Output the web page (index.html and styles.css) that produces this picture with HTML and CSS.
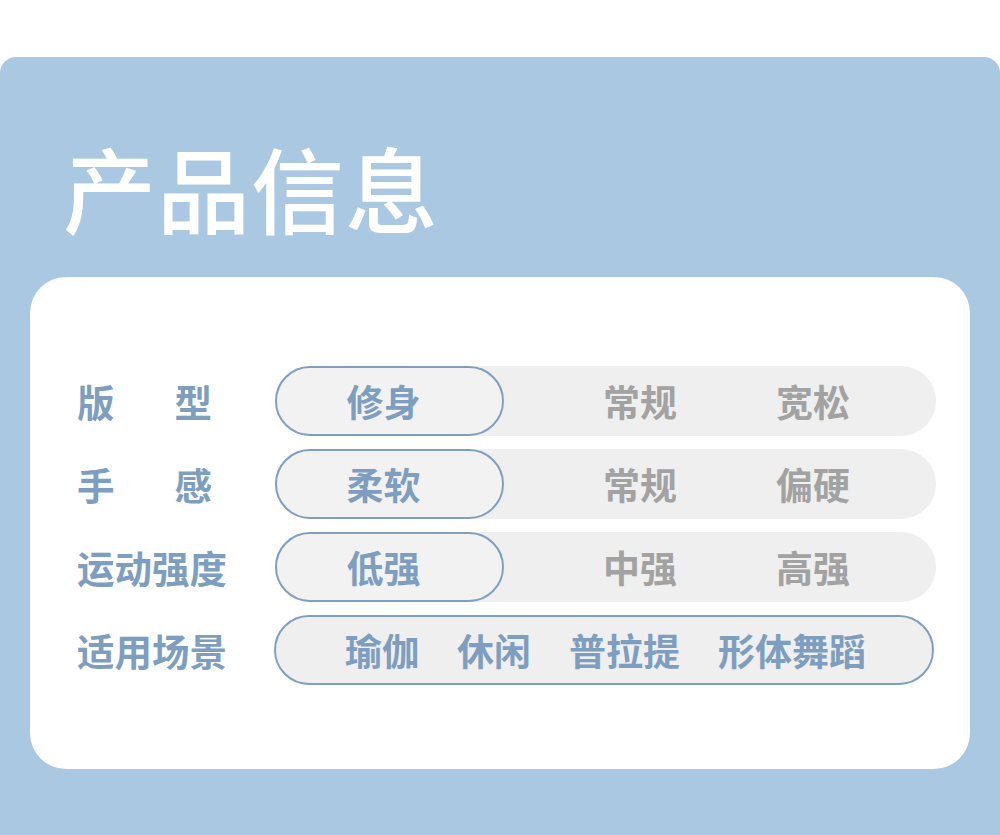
FILE: index.html
```html
<!DOCTYPE html>
<html lang="zh-CN">
<head>
<meta charset="utf-8">
<link rel="stylesheet" href="styles.css">
</head>
<body>
<section class="panel">
  <h1 class="title">产品信息</h1>
  <div class="card">
    <div class="row">
      <div class="label label-split"><span>版</span><span>型</span></div>
      <div class="track">
        <div class="opt selected">修身</div>
        <div class="opt">常规</div>
        <div class="opt">宽松</div>
      </div>
    </div>
    <div class="row">
      <div class="label label-split"><span>手</span><span>感</span></div>
      <div class="track">
        <div class="opt selected">柔软</div>
        <div class="opt">常规</div>
        <div class="opt">偏硬</div>
      </div>
    </div>
    <div class="row">
      <div class="label">运动强度</div>
      <div class="track">
        <div class="opt selected">低强</div>
        <div class="opt">中强</div>
        <div class="opt">高强</div>
      </div>
    </div>
    <div class="row">
      <div class="label">适用场景</div>
      <div class="track track-all">
        <span>瑜伽</span><span>休闲</span><span>普拉提</span><span>形体舞蹈</span>
      </div>
    </div>
  </div>
</section>
</body>
</html>
```
FILE: styles.css
```css
html, body {
  margin: 0;
  padding: 0;
  background: #ffffff;
}
body {
  width: 1000px;
  height: 835px;
  overflow: hidden;
  font-family: "Noto Sans CJK SC", "Noto Sans", sans-serif;
}
.panel {
  margin-top: 57px;
  height: 778px;
  background: #abc8e2;
  border-radius: 16px 16px 0 0;
  padding: 0 30px;
  box-sizing: border-box;
  overflow: hidden;
}
.title {
  margin: 0;
  padding: 80px 0 0 33px;
  height: 220px;
  box-sizing: border-box;
  font-size: 93px;
  line-height: 100px;
  font-weight: 500;
  color: #ffffff;
  letter-spacing: 1px;
}
.card {
  background: #ffffff;
  border-radius: 36px;
  height: 492px;
  box-sizing: border-box;
  padding: 89px 34px 0 47px;
  display: flex;
  flex-direction: column;
  gap: 13px;
}
.row {
  display: flex;
  align-items: center;
  height: 70px;
}
.label {
  width: 198px;
  flex: none;
  font-size: 37.5px;
  font-weight: 700;
  color: #7e9ec0;
  line-height: 1;
}
.label-split {
  display: flex;
  gap: 60px;
}
.track {
  flex: 1;
  height: 70px;
  border-radius: 35px;
  background: #efefef;
  display: flex;
  align-items: center;
}
.opt {
  font-size: 37px;
  font-weight: 700;
  color: #a2a2a2;
  line-height: 1;
  text-align: center;
  white-space: nowrap;
}
.opt:nth-child(2) {
  width: 272px;
}
.opt:nth-child(3) {
  width: 66px;
}
.opt.selected {
  width: 229px;
  height: 70px;
  box-sizing: border-box;
  border: 2px solid #809fc0;
  border-radius: 35px;
  background: #f2f2f2;
  color: #7e9ec0;
  display: flex;
  align-items: center;
  justify-content: center;
  padding-right: 12px;
}
.track-all {
  border: 2px solid #809fc0;
  box-sizing: border-box;
  margin-left: -1px;
  margin-right: 2px;
  padding-left: 69px;
  gap: 38px;
  font-size: 37px;
  font-weight: 700;
  color: #7e9ec0;
}
```
